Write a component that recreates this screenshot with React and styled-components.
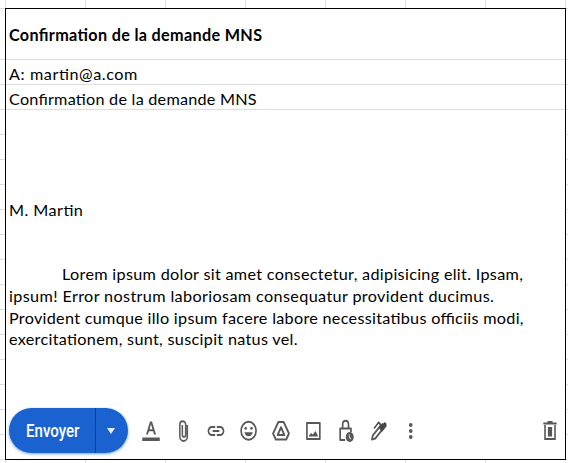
import React from 'react';
import styled, { createGlobalStyle } from 'styled-components';

const Global = createGlobalStyle`
  * { box-sizing: border-box; }
  body { margin: 0; background: #fff; overflow: hidden; }
`;

const Sheet = styled.main`
  display: grid;
  grid-template-columns: 5px 561px 2px;
  grid-template-rows: 8px 452px 3px;
  width: 569px;
  height: 463px;
  background: #fff;
  color: #000;
  font-family: Lato, Carlito, sans-serif;
`;

const Columns = styled.div`
  grid-column: 2;
  grid-row: ${(p) => p.$row};
  background: repeating-linear-gradient(to right, #dedede 0 1px, transparent 1px 80px);
`;

const Rows = styled.div`
  grid-column: ${(p) => p.$column};
  grid-row: 2;
  background:
    linear-gradient(#dedede, #dedede) 0 0 / 100% 1px no-repeat,
    repeating-linear-gradient(#dedede 0 1px, transparent 1px 25px) 0 51px / 100% 401px no-repeat;
`;

const Mail = styled.section`
  grid-column: 2;
  grid-row: 2;
  display: flex;
  flex-direction: column;
  border: 1px solid #000;
`;

const Field = styled.div`
  height: ${(p) => p.$height}px;
  padding: ${(p) => p.$top}px 0 0 3px;
  border-bottom: 1px solid #dedede;
`;

const Message = styled.div`
  flex: 1;
  padding: 89px 0 0 3px;
`;

const Paragraph = styled.div`
  margin-top: 42px;
`;

const Line = styled.div`
  height: ${(p) => p.$height || 22}px;
  padding-left: ${(p) => p.$indent || 0}px;
  font-size: 16.2px;
  line-height: 22px;
  font-weight: ${(p) => (p.$bold ? 700 : 400)};
  letter-spacing: ${(p) => p.$spacing || 0}px;
  font-feature-settings: 'liga' 1;
  white-space: nowrap;
`;

const Toolbar = styled.footer`
  display: flex;
  align-items: center;
  height: 45px;
  margin: 0 5px 6px 3px;
`;

const SendButton = styled.div`
  display: flex;
  width: 119px;
  height: 45px;
  border-radius: 23px;
  background: #1b62d1;
  color: #fff;
  box-shadow: 0 1px 3px #6fa5f5;
`;

const SendLabel = styled.span`
  width: 87px;
  padding-left: 17px;
  border-right: 1px solid #0b3b8c;
  font: 500 17.5px/46px Roboto, sans-serif;
`;

const Squeeze = styled.span`
  display: inline-block;
  transform: scaleX(0.86);
  transform-origin: left;
`;

const Caret = styled.i`
  margin: 20px 0 0 11px;
  width: 8px;
  height: 6px;
  background: #e4efff;
  clip-path: polygon(0 0, 100% 0, 50% 100%);
`;

const Tools = styled.div`
  display: flex;
  gap: 12.5px;
  margin-left: 13px;
`;

const Glyph = styled.svg`
  display: block;
  width: 20px;
  height: 24px;
  fill: ${(p) => p.$tone || '#585858'};
`;

const Trash = styled.div`
  margin-left: auto;
`;

const Icon = ({ d, tone, children }) => (
  <Glyph viewBox="0 0 24 24" preserveAspectRatio="none" $tone={tone}>
    {d && <path d={d} />}
    {children}
  </Glyph>
);

export default function App() {
  return (
    <>
      <Global />
      <Sheet>
        <Columns $row={1} />
        <Rows $column={1} />
        <Mail>
          <Field $height={51} $top={15}>
            <Line $bold $spacing={0.33}>Confirmation de la demande MNS</Line>
          </Field>
          <Field $height={25} $top={3}>
            <Line $spacing={0.58}>A: martin@a.com</Line>
          </Field>
          <Field $height={25} $top={3}>
            <Line $spacing={0.24}>Confirmation de la demande MNS</Line>
          </Field>
          <Message>
            <Line $spacing={0.45}>M. Martin</Line>
            <Paragraph>
              <Line $indent={53} $spacing={0.31}>Lorem ipsum dolor sit amet consectetur, adipisicing elit. Ipsam,</Line>
              <Line $spacing={0.37}>ipsum! Error nostrum laboriosam consequatur provident ducimus.</Line>
              <Line $height={21} $spacing={0.29}>Provident cumque illo ipsum facere labore necessitatibus officiis modi,</Line>
              <Line $spacing={0.31}>exercitationem, sunt, suscipit natus vel.</Line>
            </Paragraph>
          </Message>
          <Toolbar>
            <SendButton>
              <SendLabel><Squeeze>Envoyer</Squeeze></SendLabel>
              <Caret />
            </SendButton>
            <Tools>
              <Icon d="M1.500 18.500h21v3.500h-21zM6 15.500h2.300l1.200-3.300h5l1.200 3.300H18L13.200 2.500h-2.400zM10.200 10.200 12 5.200l1.800 5z" />
              <Icon>
                <path d="M16 6v11.500c0 2.500-2 4.500-4.500 4.500S7 20 7 17.500V5.500C7 3.500 8.500 2.200 10.500 2.200S14 3.500 14 5.500v10.500c0 2.500-4 2.500-4 0V6" fill="none" stroke="#606060" strokeWidth="1.900" />
              </Icon>
              <Icon d="M3.900 12c0-1.710 1.390-3.100 3.100-3.100h4V7H7c-2.760 0-5 2.240-5 5s2.240 5 5 5h4v-1.900H7c-1.710 0-3.100-1.390-3.100-3.100M8 13h8v-2H8zm9-6h-4v1.900h4c1.710 0 3.100 1.390 3.100 3.100s-1.390 3.100-3.100 3.100h-4V17h4c2.760 0 5-2.240 5-5s-2.240-5-5-5" />
              <Icon>
                <circle cx="11.500" cy="11.800" r="9" fill="none" stroke="#585858" strokeWidth="2" />
                <circle cx="8" cy="9.300" r="1.500" />
                <circle cx="15" cy="9.300" r="1.500" />
                <path d="M6.500 13.300h10c-.7 2.400-2.600 4-5 4s-4.300-1.600-5-4" />
              </Icon>
              <Icon>
                <path d="M8.800 3h6.400l6.300 11.500-3.200 6H5.700l-3.200-6zM12 8.300 8 16h8z" fill="none" stroke="#585858" strokeWidth="2.200" strokeLinejoin="round" />
              </Icon>
              <Icon>
                <path d="M3.500 4H19v16H3.500z" fill="none" stroke="#585858" strokeWidth="2" strokeLinejoin="round" />
                <path d="M6 17.500v-1l2.500-2.500 2 1.500L14 12l2.500 4.500v1z" />
              </Icon>
              <Icon>
                <path d="M11 21H5V9.500h13V13M8 9V5.500c0-5 7-5 7 0V9" fill="none" stroke="#585858" strokeWidth="2" strokeLinejoin="round" />
                <ellipse cx="16.500" cy="18" rx="4.800" ry="5" />
                <path d="M16 15.500v3l2 1.500" fill="none" stroke="#d8d8d8" strokeWidth="1.200" />
              </Icon>
              <Icon tone="#484848">
                <path d="M13.500 7 4.500 16.500 3.500 20.500 7.500 19.500 16.500 10z" fill="none" stroke="#585858" strokeWidth="2" strokeLinejoin="round" />
                <path d="M11.500 8.500 16 4l1.500.5L18.500 3l2.500 1.500v3L15.500 13z" />
                <path d="M6 9.500l5.500-6 3 2.500" fill="none" stroke="#484848" strokeWidth="1.800" />
              </Icon>
              <Icon>
                <ellipse cx="11.700" cy="6" rx="2.200" ry="1.900" />
                <ellipse cx="11.700" cy="12" rx="2.200" ry="1.900" />
                <ellipse cx="11.700" cy="18" rx="2.200" ry="1.900" />
              </Icon>
            </Tools>
            <Trash>
              <Icon>
                <path d="M6 6v14h12V6M4 4.500h16M9 3h6" fill="none" stroke="#585858" strokeWidth="1.900" />
                <path d="M9.500 8h5v9.500h-5z" />
              </Icon>
            </Trash>
          </Toolbar>
        </Mail>
        <Rows $column={3} />
        <Columns $row={3} />
      </Sheet>
    </>
  );
}
